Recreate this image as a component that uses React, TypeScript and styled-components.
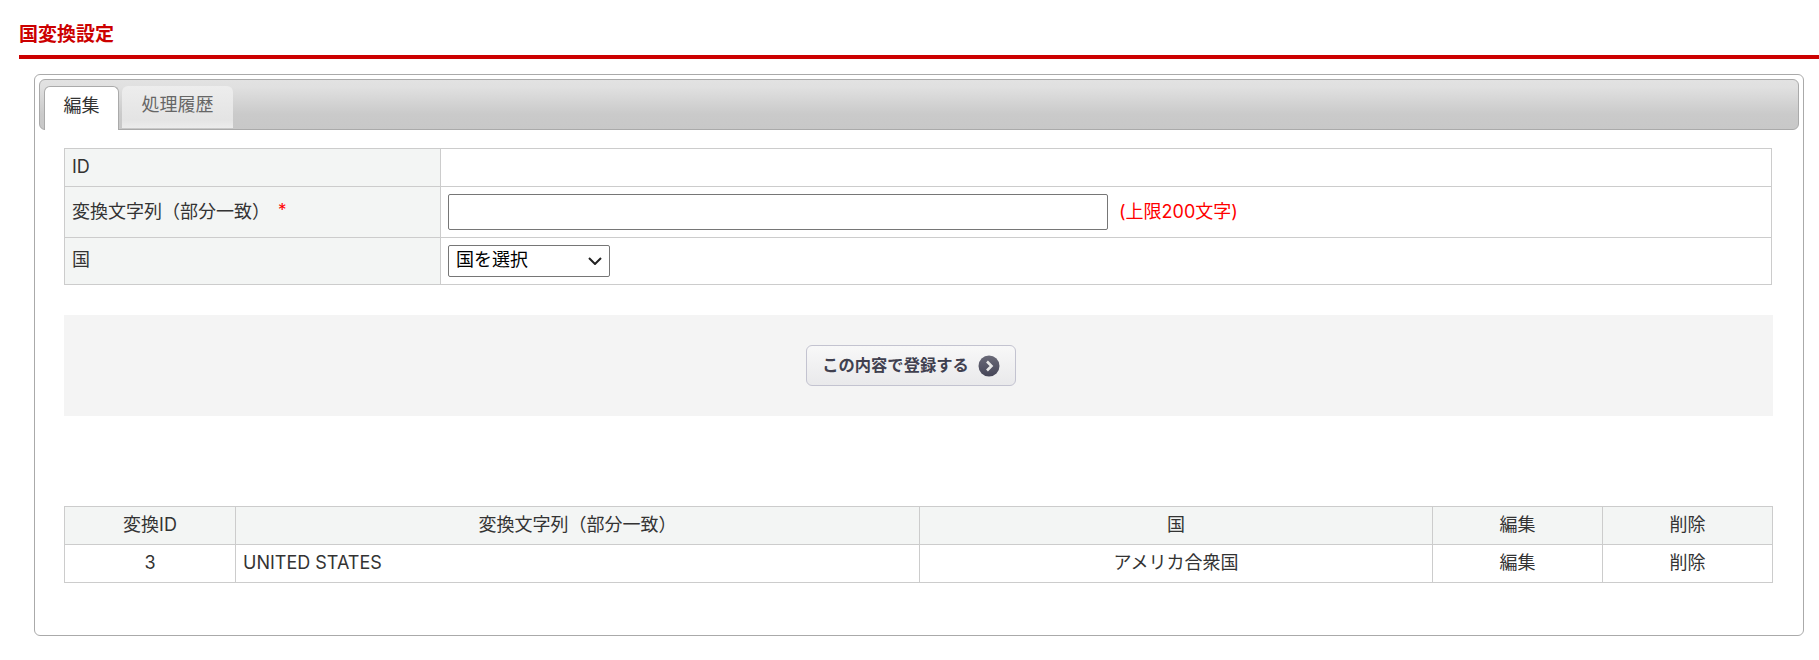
import React from "react";
import styled, { createGlobalStyle } from "styled-components";

const Global = createGlobalStyle`
  html, body { margin: 0; padding: 0; background: #fff; }
  body { font-family: "Inter", "Noto Sans CJK JP", "Liberation Sans", sans-serif; font-size: 18px; color: #333; }
`;
const Page = styled.div`
  width: 1819px;
  height: 660px;
  overflow: hidden;
  box-sizing: border-box;
  padding: 22px 0 0 19px;
`;
const Title = styled.h1`
  margin: 0;
  height: 33px;
  border-bottom: 4px solid #cc0000;
  color: #cc0000;
  font-family: "Noto Sans CJK JP", sans-serif;
  font-size: 19px;
  line-height: 22px;
  font-weight: 700;
`;
const Panel = styled.section`
  box-sizing: border-box;
  width: 1770px;
  height: 562px;
  margin: 15px 0 0 15px;
  padding: 4px;
  border: 1px solid #aaa;
  border-radius: 6px;
`;
const TabBar = styled.div`
  box-sizing: border-box;
  height: 51px;
  display: flex;
  align-items: flex-end;
  gap: 3px;
  padding: 0 0 0 4px;
  border: 1px solid #aaa;
  border-radius: 6px;
  background: linear-gradient(to bottom, #e2e2e2 0%, #e0e0e0 15%, #cacaca 70%, #c8c8c8 100%);
`;
const Tab = styled.div<{ $active?: boolean }>`
  box-sizing: border-box;
  width: ${(p) => (p.$active ? 75 : 111)}px;
  height: ${(p) => (p.$active ? 44 : 42)}px;
  margin-bottom: ${(p) => (p.$active ? -1 : 1)}px;
  padding-top: 3px;
  display: flex;
  align-items: flex-start;
  justify-content: center;
  font-size: 18px;
  line-height: 32px;
  color: ${(p) => (p.$active ? "#333" : "#666")};
  border-radius: 6px 6px 0 0;
  background: ${(p) => (p.$active ? "#fff" : "linear-gradient(to bottom, #ededed, #e4e4e4 80%, #ececec)")};
  border: ${(p) => (p.$active ? "1px solid #aaa" : "0")};
  border-bottom: 0;
`;
const Body = styled.div`
  padding: 18px 25px 0;
`;
const Table = styled.table`
  width: 1708px;
  border-collapse: collapse;
  table-layout: fixed;
  font-size: 18px;
  line-height: 24px;
  & th, & td { border: 1px solid #ccc; padding: 0 7px; }
`;
const FormHead = styled.th`
  && { padding-bottom: 2px; }
  background: #f3f5f4;
  font-weight: 400;
  text-align: left;
`;
const Required = styled.span`
  color: #f00;
  margin-left: 8px;
  font-size: 17px;
  vertical-align: 2px;
`;
const TextInput = styled.input`
  box-sizing: border-box;
  width: 660px;
  height: 36px;
  padding: 1px 2px;
  margin: 7px 0;
  border: 1px solid #767676;
  border-radius: 2px;
  vertical-align: middle;
`;
const Note = styled.span`
  margin-left: 11px;
  color: #f00;
  vertical-align: middle;
`;
const Select = styled.select`
  display: block;
  box-sizing: border-box;
  width: 162px;
  height: 32px;
  margin: 7px 0;
  padding: 0 24px 2px 7px;
  appearance: none;
  background: #fff url("data:image/svg+xml,%3Csvg xmlns='http://www.w3.org/2000/svg' width='14' height='8' viewBox='0 0 14 8'%3E%3Cpath d='M1 1l6 6 6-6' fill='none' stroke='%23222' stroke-width='2'/%3E%3C/svg%3E") no-repeat right 7px center;
  color: #000;
  font: inherit;
  line-height: 28px;
  border: 1px solid #767676;
  border-radius: 2px;
`;
const ButtonArea = styled.div`
  box-sizing: border-box;
  width: 1709px;
  height: 101px;
  margin-top: 30px;
  padding-right: 15px;
  background: #f4f4f4;
  display: flex;
  align-items: center;
  justify-content: center;
`;
const Submit = styled.button`
  box-sizing: border-box;
  width: 210px;
  height: 41px;
  display: flex;
  align-items: center;
  justify-content: center;
  gap: 9px;
  padding: 0;
  border: 1px solid #c3c3d0;
  border-radius: 6px;
  background: linear-gradient(to bottom, #f8f8f8, #e9e9eb);
  color: #40404f;
  font: 700 16.3px "Noto Sans CJK JP", "Liberation Sans", sans-serif;
`;
const SubmitLabel = styled.span`
  margin-bottom: 4px;
`;
const ListWrap = styled.div`
  margin-top: 90px;
`;
const HeadCell = styled.th`
  && { padding-bottom: 2px; }
  height: 35px;
  background: #f3f5f4;
  font-weight: 400;
  text-align: center;
`;
const Cell = styled.td<{ $left?: boolean }>`
  && { padding-bottom: 2px; }
  height: 35px;
  text-align: ${(p) => (p.$left ? "left" : "center")};
`;

export default function App() {
  return (
    <Page>
      <Global />
      <Title>国変換設定</Title>
      <Panel>
        <TabBar>
          <Tab $active>編集</Tab>
          <Tab>処理履歴</Tab>
        </TabBar>
        <Body>
          <Table>
            <colgroup>
              <col style={{ width: 376 }} />
              <col />
            </colgroup>
            <tbody>
              <tr style={{ height: 38 }}>
                <FormHead>ID</FormHead>
                <td />
              </tr>
              <tr>
                <FormHead>
                  変換文字列（部分一致）<Required>*</Required>
                </FormHead>
                <td>
                  <TextInput type="text" />
                  <Note>(上限200文字)</Note>
                </td>
              </tr>
              <tr>
                <FormHead>国</FormHead>
                <td>
                  <Select defaultValue="">
                    <option value="">国を選択</option>
                  </Select>
                </td>
              </tr>
            </tbody>
          </Table>
          <ButtonArea>
            <Submit type="button">
              <SubmitLabel>この内容で登録する</SubmitLabel>
              <svg width="22" height="22" viewBox="0 0 22 22" aria-hidden="true">
                <defs>
                  <linearGradient id="knob" x1="0" y1="0" x2="0" y2="1">
                    <stop offset="0" stopColor="#6a6a78" />
                    <stop offset="1" stopColor="#464658" />
                  </linearGradient>
                </defs>
                <circle cx="11" cy="11" r="10.5" fill="url(#knob)" />
                <path d="M9 6.5 L13.5 11 L9 15.5" fill="none" stroke="#e8e8e8" strokeWidth="2.6" />
              </svg>
            </Submit>
          </ButtonArea>
          <ListWrap>
            <Table>
              <colgroup>
                <col style={{ width: 171 }} />
                <col style={{ width: 684 }} />
                <col style={{ width: 513 }} />
                <col style={{ width: 170 }} />
                <col style={{ width: 170 }} />
              </colgroup>
              <tbody>
                <tr>
                  <HeadCell>変換ID</HeadCell>
                  <HeadCell>変換文字列（部分一致）</HeadCell>
                  <HeadCell>国</HeadCell>
                  <HeadCell>編集</HeadCell>
                  <HeadCell>削除</HeadCell>
                </tr>
                <tr>
                  <Cell>3</Cell>
                  <Cell $left>UNITED STATES</Cell>
                  <Cell>アメリカ合衆国</Cell>
                  <Cell>編集</Cell>
                  <Cell>削除</Cell>
                </tr>
              </tbody>
            </Table>
          </ListWrap>
        </Body>
      </Panel>
    </Page>
  );
}
